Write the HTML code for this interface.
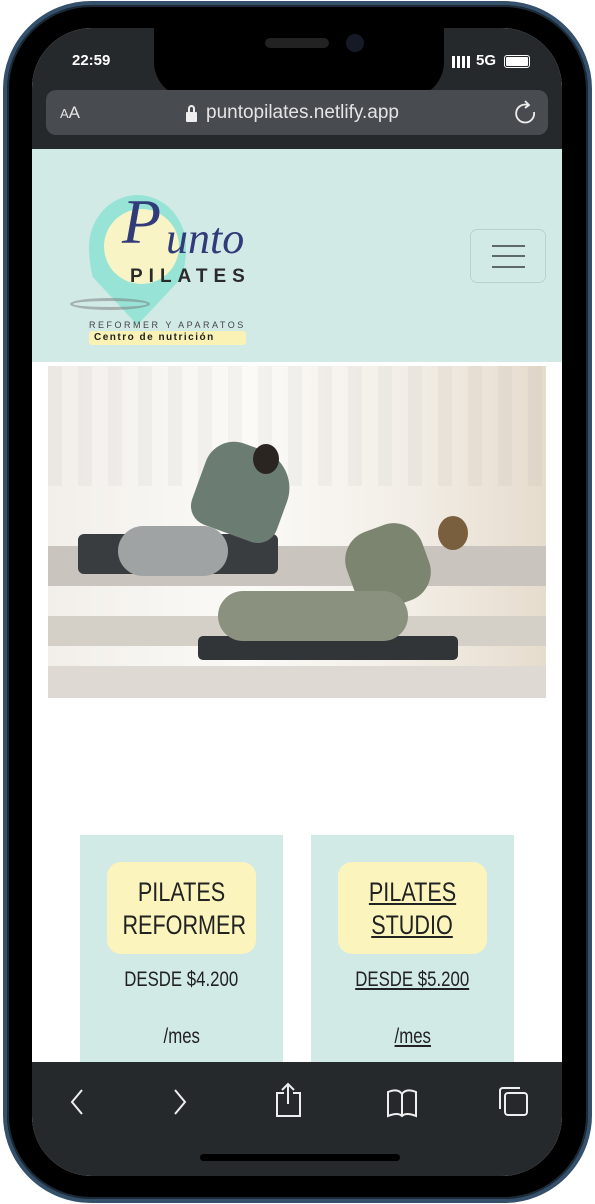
<!DOCTYPE html>
<html><head><meta charset="utf-8">
<style>
*{margin:0;padding:0;box-sizing:border-box}
body{width:595px;height:1204px;background:#fff;position:relative;overflow:hidden;font-family:"Liberation Sans",sans-serif}
.phone{position:absolute;left:3px;top:1px;width:589px;height:1202px;border-radius:88px;background:#000;border:4px solid #34506a;box-shadow:inset 0 0 0 2px #1b2a36}
.screen{position:absolute;left:32px;top:28px;width:530px;height:1148px;border-radius:60px;overflow:hidden;background:#fff}
.top{position:absolute;left:0;top:0;width:530px;height:121px;background:#25292c}
.notch{position:absolute;left:122px;top:-2px;width:290px;height:72px;background:#000;border-radius:0 0 36px 36px}
.time{position:absolute;left:40px;top:24px;color:#fff;font-size:15px;font-weight:bold}
.url{position:absolute;left:14px;top:62px;width:502px;height:45px;border-radius:10px;background:#484b4f;color:#e4e4e4}
.nav{position:absolute;left:0;top:121px;width:530px;height:213px;background:#d1eae6}
.ham{position:absolute;left:438px;top:80px;width:76px;height:54px;border:1px solid #b8d3cf;border-radius:7px}
.ham i{position:absolute;left:21px;width:33px;height:2px;background:#5f6a68}
.photo{position:absolute;left:16px;top:338px;width:498px;height:332px;background:linear-gradient(90deg,#f2efea,#fbfaf7 40%,#f3efe8 70%,#e6dccd);overflow:hidden}
.card{position:absolute;top:807px;width:203px;height:240px;background:#d1eae6;text-align:center;font-family:"Liberation Sans",sans-serif;color:#222}
.card span{display:inline-block;transform:scaleX(.8)}
.badge{position:absolute;left:27px;top:27px;width:149px;height:92px;background:#fbf5bd;border-radius:14px;font-size:27px;line-height:33px;padding-top:14px}
.price{position:absolute;left:0;width:100%;top:133px;font-size:21px}
.mes{position:absolute;left:0;width:100%;top:190px;font-size:21px}
.u span{text-decoration:underline}
.bot{position:absolute;left:0;top:1034px;width:530px;height:114px;background:#25292c}
</style></head><body>
<div class="phone"></div>
<div class="screen">
 <div class="top">
  <div class="notch"><div style="position:absolute;left:111px;top:12px;width:64px;height:10px;border-radius:5px;background:#222"></div><div style="position:absolute;left:192px;top:8px;width:18px;height:18px;border-radius:50%;background:#151a26"></div></div>
  <div class="time">22:59</div>
  <div style="position:absolute;left:420px;top:28px;width:18px;height:12px;background:linear-gradient(90deg,#fff 3px,transparent 3px,transparent 5px,#fff 5px,#fff 8px,transparent 8px,transparent 10px,#fff 10px,#fff 13px,transparent 13px,transparent 15px,#fff 15px)"></div>
  <div style="position:absolute;left:444px;top:24px;color:#fff;font-size:15px;font-weight:bold">5G</div>
  <div style="position:absolute;left:472px;top:27px;width:26px;height:13px;border:1.5px solid #fff;border-radius:3px;padding:1px"><div style="background:#fff;width:100%;height:100%;border-radius:1px"></div></div>
  <div class="url">
   <span style="position:absolute;left:14px;top:13px;font-size:17px"><small style="font-size:13px">A</small>A</span>
   <div style="position:absolute;left:140px;top:22px;width:11px;height:10px;background:#eee;border-radius:1px"></div>
   <div style="position:absolute;left:142px;top:15px;width:7px;height:9px;border:2px solid #eee;border-bottom:none;border-radius:4px 4px 0 0"></div>
   <span style="position:absolute;left:160px;top:12px;font-size:19px">puntopilates.netlify.app</span>
   <svg style="position:absolute;left:468px;top:10px" width="24" height="26" viewBox="0 0 24 26"><path d="M14 5 A9 9 0 1 0 20 12" fill="none" stroke="#eee" stroke-width="1.8"/><path d="M11 1 L15 5 L11 8" fill="none" stroke="#eee" stroke-width="1.8"/></svg>
  </div>
 </div>
 <div class="nav">
  <div style="position:absolute;left:57px;top:46px;width:97px;height:130px;background:#97e3d6;border-radius:50% 50% 50% 50%/40% 40% 60% 60%;clip-path:polygon(0 0,100% 0,100% 60%,50% 100%,0 60%)"></div>
  <div style="position:absolute;left:38px;top:149px;width:80px;height:12px;border:3px solid #777;border-radius:50%;opacity:.5"></div>
  <div style="position:absolute;left:72px;top:60px;width:75px;height:75px;background:#f8f4c6;border-radius:50%"></div>
  <div style="position:absolute;left:90px;top:36px;font-family:'Liberation Serif',serif;font-style:italic;font-size:64px;color:#323b7a">P</div>
  <div style="position:absolute;left:134px;top:64px;font-family:'Liberation Serif',serif;font-style:italic;font-size:44px;color:#323b7a">unto</div>
  <div style="position:absolute;left:98px;top:117px;font-size:19px;font-weight:bold;letter-spacing:6px;color:#2a2a2a">PILATES</div>
  <div style="position:absolute;left:57px;top:171px;font-size:9px;letter-spacing:2.5px;color:#444">REFORMER Y APARATOS</div>
  <div style="position:absolute;left:57px;top:182px;width:157px;height:14px;background:#faf2b4;border-radius:3px;font-size:10px;font-weight:bold;letter-spacing:1.5px;color:#222;padding-left:5px;line-height:14px">Centro de nutrición</div>
  <div class="ham"><i style="top:15px"></i><i style="top:25px"></i><i style="top:36px"></i></div>
 </div>
 <div class="photo">
  <div style="position:absolute;left:0;top:0;width:498px;height:120px;background:repeating-linear-gradient(90deg,rgba(0,0,0,0.03) 0 14px,transparent 14px 30px)"></div>
  <div style="position:absolute;left:0;top:180px;width:498px;height:40px;background:#c9c4bd"></div>
  <div style="position:absolute;left:0;top:250px;width:498px;height:30px;background:#d4d0c8"></div>
  <div style="position:absolute;left:0;top:300px;width:498px;height:32px;background:#dedad3"></div>
  <div style="position:absolute;left:30px;top:168px;width:200px;height:40px;background:#3a3d40;border-radius:6px"></div>
  <div style="position:absolute;left:150px;top:270px;width:260px;height:24px;background:#323538;border-radius:5px"></div>
  <div style="position:absolute;left:150px;top:80px;width:90px;height:90px;background:#6b7c73;border-radius:30px 40px 20px 20px;transform:rotate(20deg)"></div>
  <div style="position:absolute;left:70px;top:160px;width:110px;height:50px;background:#9fa3a4;border-radius:25px"></div>
  <div style="position:absolute;left:205px;top:78px;width:26px;height:30px;background:#2b2522;border-radius:50%"></div>
  <div style="position:absolute;left:300px;top:160px;width:80px;height:80px;background:#7c856f;border-radius:30px;transform:rotate(-20deg)"></div>
  <div style="position:absolute;left:170px;top:225px;width:190px;height:50px;background:#8a917f;border-radius:25px"></div>
  <div style="position:absolute;left:390px;top:150px;width:30px;height:34px;background:#7a5f3f;border-radius:50%"></div>
 </div>
 <div class="card" style="left:48px"><div class="badge"><span>PILATES</span><br><span>REFORMER</span></div><div class="price"><span>DESDE $4.200</span></div><div class="mes"><span>/mes</span></div></div>
 <div class="card u" style="left:279px"><div class="badge"><span>PILATES</span><br><span>STUDIO</span></div><div class="price"><span>DESDE $5.200</span></div><div class="mes"><span>/mes</span></div></div>
 <div class="bot">
  <svg width="530" height="114" viewBox="0 0 530 114" fill="none" stroke="#eee" stroke-width="2">
   <path d="M50 28 L40 40 L50 52"/>
   <path d="M143 28 L153 40 L143 52"/>
   <path d="M252 31 L245 31 L245 54 L268 54 L268 31 L261 31 M256 42 L256 23 M250 28 L256 22 L262 28"/>
   <path d="M356 54 L356 30 Q366 26 370 32 Q374 26 384 30 L384 54 Q374 50 370 54 Q366 50 356 54 Z M370 32 L370 54"/>
   <rect x="473" y="31" width="22" height="22" rx="3"/><path d="M468 47 L468 29 Q468 26 471 26 L488 26"/>
  </svg>
  <div style="position:absolute;left:168px;top:92px;width:200px;height:7px;border-radius:4px;background:#000"></div>
 </div>
</div>
</body></html>
